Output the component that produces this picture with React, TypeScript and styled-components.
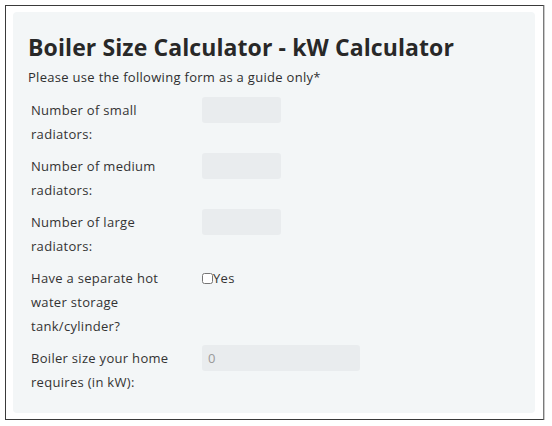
import * as React from 'react';
import styled, { createGlobalStyle } from 'styled-components';

const GlobalStyle = createGlobalStyle`
  html, body {
    margin: 0;
    padding: 0;
    background: #ffffff;
  }
  body {
    font-family: 'Open Sans', 'Liberation Sans', sans-serif;
    color: #2f2f2f;
  }
`;

const Page = styled.div`
  padding: 5px 8px 7px 5px;
`;

const Frame = styled.div`
  border: 1px solid #3a3a3a;
  border-right-color: #7a7a7a;
  box-shadow: 1px 0 0 #c8c8c8;
  padding: 6px 8px 6px 7px;
  background: #ffffff;
`;

const Panel = styled.div`
  background: #f3f6f7;
  border-radius: 4px;
  padding: 18px 15px 19px 15px;
`;

const Title = styled.h2`
  margin: 0;
  font-size: 23px;
  line-height: 34px;
  font-weight: 700;
  color: #282828;
  letter-spacing: 0.1px;
`;

const Intro = styled.p`
  margin: 2px 0 10px;
  font-size: 13px;
  line-height: 22px;
  letter-spacing: 0.3px;
  color: #2f2f2f;
`;

const Form = styled.div`
  display: flex;
  flex-direction: column;
  gap: 8px;
  padding-left: 3px;
`;

const Row = styled.div`
  display: grid;
  grid-template-columns: 171px 1fr;
  align-items: start;
`;

const Label = styled.label`
  font-size: 13px;
  line-height: 24px;
  letter-spacing: 0.3px;
  color: #333333;
  width: 140px;
`;

const NumberInput = styled.input<{ $wide?: boolean }>`
  box-sizing: border-box;
  width: ${({ $wide }) => ($wide ? '158px' : '79px')};
  height: 26px;
  margin-top: -1px;
  border: none;
  border-radius: 3px;
  background: #e9ecee;
  padding: 0 6px;
  font-family: inherit;
  font-size: 13px;
  color: #555555;
  outline: none;

  &::placeholder {
    color: #9a9a9a;
  }
`;

const CheckLabel = styled.label`
  display: flex;
  align-items: center;
  font-size: 13px;
  line-height: 24px;
  letter-spacing: 0.3px;
  color: #333333;

  input {
    margin: 0;
    width: 11px;
    height: 11px;
  }
`;

type Field = {
  label: string;
};

const radiatorFields: Field[] = [
  { label: 'Number of small radiators:' },
  { label: 'Number of medium radiators:' },
  { label: 'Number of large radiators:' },
];

export default function App() {
  return (
    <>
      <GlobalStyle />
      <Page>
        <Frame>
          <Panel>
            <Title>Boiler Size Calculator - kW Calculator</Title>
            <Intro>Please use the following form as a guide only*</Intro>
            <Form>
              {radiatorFields.map((item) => (
                <Row key={item.label}>
                  <Label>{item.label}</Label>
                  <div>
                    <NumberInput type="text" />
                  </div>
                </Row>
              ))}
              <Row>
                <Label>Have a separate hot water storage tank/cylinder?</Label>
                <CheckLabel>
                  <input type="checkbox" />
                  Yes
                </CheckLabel>
              </Row>
              <Row>
                <Label>Boiler size your home requires (in kW):</Label>
                <div>
                  <NumberInput type="text" placeholder="0" $wide readOnly />
                </div>
              </Row>
            </Form>
          </Panel>
        </Frame>
      </Page>
    </>
  );
}
